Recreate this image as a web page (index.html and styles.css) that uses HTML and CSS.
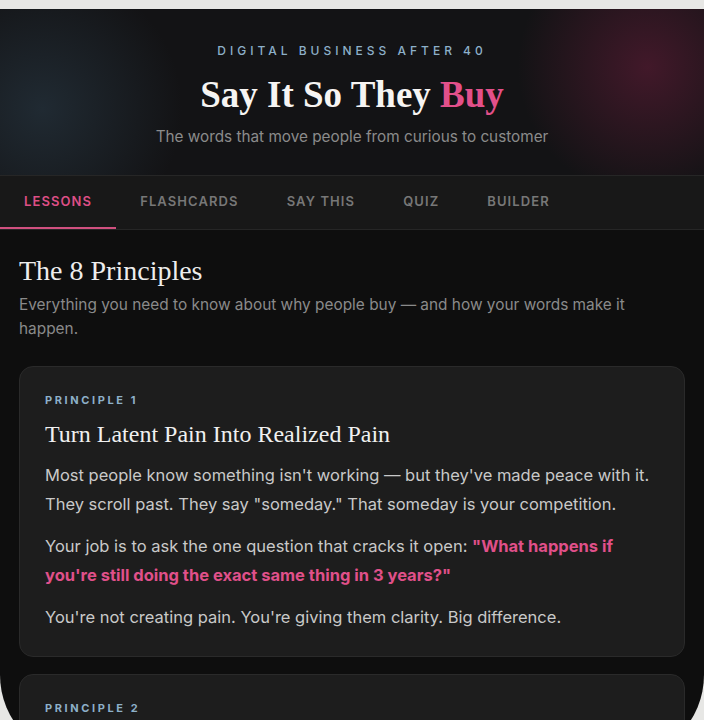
FILE: index.html
```html
<!DOCTYPE html>
<html lang="en">
<head>
    <meta charset="UTF-8">
    <meta name="viewport" content="width=device-width, initial-scale=1.0">
    <title>Say It So They Buy</title>
    <link rel="stylesheet" href="styles.css">
</head>
<body>
    <div class="frame">
        <!-- Hero header -->
        <header class="hero">
            <div class="eyebrow">Digital Business After 40</div>
            <h1 class="title">Say It So They <span class="accent">Buy</span></h1>
            <p class="subtitle">The words that move people from curious to customer</p>
        </header>

        <!-- Section tabs -->
        <nav class="tabs">
            <a class="tab active" href="#">Lessons</a>
            <a class="tab" href="#">Flashcards</a>
            <a class="tab" href="#">Say This</a>
            <a class="tab" href="#">Quiz</a>
            <a class="tab" href="#">Builder</a>
        </nav>

        <main class="content">
            <h2 class="section-title">The 8 Principles</h2>
            <p class="section-intro">Everything you need to know about why people buy — and how your words make it happen.</p>

            <div class="card">
                <div class="card-label">Principle 1</div>
                <h3 class="card-title">Turn Latent Pain Into Realized Pain</h3>
                <p>Most people know something isn't working — but they've made peace with it. They scroll past. They say "someday." That someday is your competition.</p>
                <p>Your job is to ask the one question that cracks it open: <strong class="highlight">"What happens if you're still doing the exact same thing in 3 years?"</strong></p>
                <p>You're not creating pain. You're giving them clarity. Big difference.</p>
            </div>

            <div class="card">
                <div class="card-label">Principle 2</div>
            </div>
        </main>
    </div>
</body>
</html>
```

FILE: styles.css
```css
/* Phone-style frame around a dark lesson page */
body {
    margin: 0;
    background-color: #e7e7e5;
    font-family: Inter, "DejaVu Sans", sans-serif;
}
.frame {
    margin-top: 9px;
    height: 750px;
    background-color: #0e0e0e;
    border-radius: 0 0 84px 84px;
    overflow: hidden;
}

/* Header */
.hero {
    padding: 34px 20px 27px;
    text-align: center;
    background-color: #131315;
    background-image:
        radial-gradient(circle at 92% 35%, rgba(112, 30, 62, 0.5) 0, rgba(112, 30, 62, 0) 130px),
        radial-gradient(circle at 6% 60%, rgba(48, 70, 86, 0.45) 0, rgba(48, 70, 86, 0) 140px);
}
.eyebrow {
    font-size: 12px;
    line-height: 16px;
    letter-spacing: 4px;
    text-transform: uppercase;
    color: #8db0c9;
    font-weight: 500;
}
.title {
    margin: 13px 0 0;
    font-family: "Liberation Serif", serif;
    font-size: 37px;
    line-height: 46px;
    font-weight: 700;
    color: #f6f4f2;
}
.accent {
    color: #e2508a;
}
.subtitle {
    margin: 8px 0 0;
    font-size: 15.3px;
    line-height: 22px;
    color: #8b8b8b;
}

/* Tabs */
.tabs {
    display: flex;
    background-color: #181818;
    border-top: 1px solid #262626;
    border-bottom: 1px solid #262626;
}
.tab {
    padding: 16px 24px 17px;
    font-size: 13px;
    line-height: 18px;
    font-weight: 600;
    letter-spacing: 1.1px;
    text-transform: uppercase;
    text-decoration: none;
    color: #777;
    border-bottom: 2px solid transparent;
}
.tab.active {
    color: #dd4f86;
    border-bottom-color: #d0507f;
}

/* Lessons */
.content {
    padding: 24px 19px 40px;
}
.section-title {
    margin: 0;
    font-family: "Liberation Serif", serif;
    font-size: 28px;
    line-height: 34px;
    font-weight: 400;
    color: #ededed;
}
.section-intro {
    margin: 5px 0 25px;
    font-size: 15.4px;
    line-height: 24px;
    color: #8a8a8a;
}
.card {
    background-color: #1d1d1d;
    border: 1px solid #2a2a2a;
    border-radius: 14px;
    padding: 25px 25px 24px;
    margin-bottom: 17px;
}
.card-label {
    font-size: 11px;
    line-height: 16px;
    font-weight: 700;
    letter-spacing: 2.6px;
    text-transform: uppercase;
    color: #8db0c9;
}
.card-title {
    margin: 11px 0 12px;
    font-family: "Liberation Serif", serif;
    font-size: 24px;
    line-height: 30px;
    font-weight: 400;
    color: #f0f0f0;
}
.card p {
    margin: 0 0 13px;
    font-size: 16.5px;
    line-height: 29px;
    color: #c9c9c9;
}
.card p:last-child {
    margin-bottom: 0;
}
.highlight {
    color: #e0508a;
    font-weight: 700;
}
```
